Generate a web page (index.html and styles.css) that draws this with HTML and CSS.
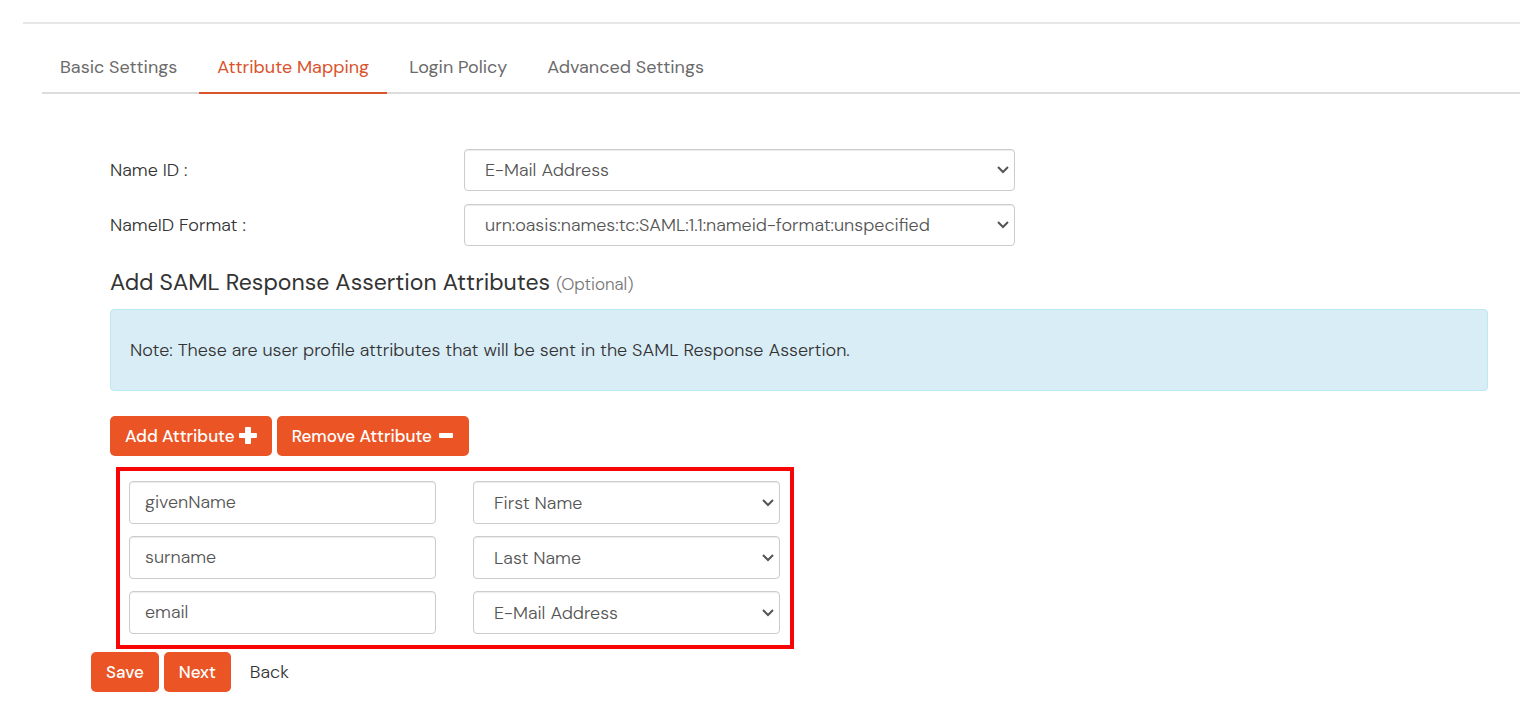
FILE: index.html
```html
<!DOCTYPE html>
<html lang="en">
<head>
  <meta charset="UTF-8">
  <title>Attribute Mapping</title>
  <meta name="viewport" content="width=device-width, initial-scale=1.0">
  <link rel="stylesheet" href="styles.css">
</head>
<body>
  <main class="panel">
    <nav class="tabs">
      <a href="#basic">Basic Settings</a>
      <a href="#mapping" class="active">Attribute Mapping</a>
      <a href="#policy">Login Policy</a>
      <a href="#advanced">Advanced Settings</a>
    </nav>

    <form class="mapping-form">
      <div class="content">
        <!-- Name ID -->
        <div class="form-row">
          <label for="nameId">Name ID :</label>
          <select id="nameId" class="form-control">
            <option>E-Mail Address</option>
            <option>Username</option>
          </select>
        </div>
        <div class="form-row">
          <label for="nameIdFormat">NameID Format :</label>
          <select id="nameIdFormat" class="form-control">
            <option>urn:oasis:names:tc:SAML:1.1:nameid-format:unspecified</option>
            <option>urn:oasis:names:tc:SAML:1.1:nameid-format:emailAddress</option>
          </select>
        </div>

        <h2>Add SAML Response Assertion Attributes <small>(Optional)</small></h2>
        <div class="note">Note: These are user profile attributes that will be sent in the SAML Response Assertion.</div>

        <div class="buttons">
          <button type="button" class="btn">Add Attribute
            <svg width="18" height="18" viewBox="0 0 18 18" aria-hidden="true"><path fill="currentColor" d="M7 0h4a1 1 0 0 1 1 1v5h5a1 1 0 0 1 1 1v3a1 1 0 0 1-1 1h-5v5a1 1 0 0 1-1 1H7a1 1 0 0 1-1-1v-5H1a1 1 0 0 1-1-1V7a1 1 0 0 1 1-1h5V1a1 1 0 0 1 1-1z"/></svg>
          </button>
          <button type="button" class="btn">Remove Attribute
            <svg width="18" height="18" viewBox="0 0 18 18" aria-hidden="true"><rect x="3" y="6" width="14" height="5" rx="1" fill="currentColor"/></svg>
          </button>
        </div>

        <!-- Attributes -->
        <div class="attributes">
          <input type="text" class="form-control" value="givenName" aria-label="Attribute name 1">
          <select class="form-control" aria-label="Attribute value 1">
            <option>First Name</option>
          </select>
          <input type="text" class="form-control" value="surname" aria-label="Attribute name 2">
          <select class="form-control" aria-label="Attribute value 2">
            <option>Last Name</option>
          </select>
          <input type="text" class="form-control" value="email" aria-label="Attribute name 3">
          <select class="form-control" aria-label="Attribute value 3">
            <option>E-Mail Address</option>
          </select>
        </div>
      </div>

      <div class="buttons actions">
        <button type="submit" class="btn">Save</button>
        <button type="button" class="btn">Next</button>
        <a href="#basic" class="back">Back</a>
      </div>
    </form>
  </main>
</body>
</html>
```
FILE: styles.css
```css
* {
  box-sizing: border-box;
}
body {
  margin: 0;
  background: #fff;
  color: #333;
  font-family: "DM Sans", Inter, sans-serif;
  font-size: 18px;
  font-weight: 300;
  line-height: 24px;
}
.panel {
  margin: 22px 0 0 23px;
  padding: 20px 0 0 19px;
  border-top: 2px solid #e7e7e7;
}

/* Tabs */
.tabs {
  display: flex;
  gap: 4px;
  border-bottom: 2px solid #dcdcdc;
}
.tabs a {
  padding: 11px 18px 13px;
  margin-bottom: -2px;
  border-bottom: 2px solid transparent;
  color: #6b6b6b;
  font-weight: 400;
  text-decoration: none;
}
.tabs a.active {
  color: #d9532c;
  border-bottom-color: #d9532c;
}

/* Form */
.mapping-form {
  padding: 55px 32px 24px 49px;
}
.content {
  padding-left: 19px;
}
.form-row {
  display: flex;
  align-items: center;
  margin-bottom: 13px;
}
.form-row label {
  flex: 0 0 354px;
}
.form-row .form-control {
  width: 40%;
}
.form-control {
  width: 100%;
  height: 42px;
  padding: 6px 15px 8px;
  border: 1px solid #ccc;
  border-radius: 4px;
  background-color: #fff;
  box-shadow: inset 0 1px 1px rgba(0, 0, 0, 0.08);
  color: #555;
  font-family: inherit;
  font-size: 18px;
  font-weight: 300;
}
select.form-control {
  appearance: none;
  padding: 6px 20px;
  background-image: url("data:image/svg+xml,%3Csvg xmlns='http://www.w3.org/2000/svg' width='12' height='8' viewBox='0 0 12 8'%3E%3Cpath d='M1 1l5 5 5-5' fill='none' stroke='%23555' stroke-width='2'/%3E%3C/svg%3E");
  background-repeat: no-repeat;
  background-position: right 5px center;
}
h2 {
  margin: 20px 0 9px;
  font-size: 23px;
  line-height: 32px;
  font-weight: 400;
}
h2 small {
  color: #777;
  font-size: 17px;
  font-weight: 300;
}
.note {
  padding: 28px 19px;
  border: 1px solid #bce8f1;
  border-radius: 4px;
  background: #d9edf7;
}

/* Buttons */
.buttons {
  display: flex;
  gap: 5px;
  margin-top: 25px;
}
.btn {
  display: flex;
  align-items: center;
  gap: 4px;
  height: 40px;
  padding: 0 15px;
  border: 0;
  border-radius: 5px;
  background: #eb5424;
  color: #fff;
  font-family: inherit;
  font-size: 17px;
  font-weight: 500;
}
.attributes {
  display: grid;
  grid-template-columns: 1fr 1fr;
  gap: 12px 37px;
  max-width: 678px;
  margin: 11px 0 0 6px;
  padding: 10px 10px 11px 9px;
  border: 4px solid #f80404;
}
.attributes .form-control {
  height: 43px;
}
.actions {
  align-items: center;
  margin-top: 3px;
}
.back {
  margin-left: 14px;
  color: #333;
  text-decoration: none;
}
```
